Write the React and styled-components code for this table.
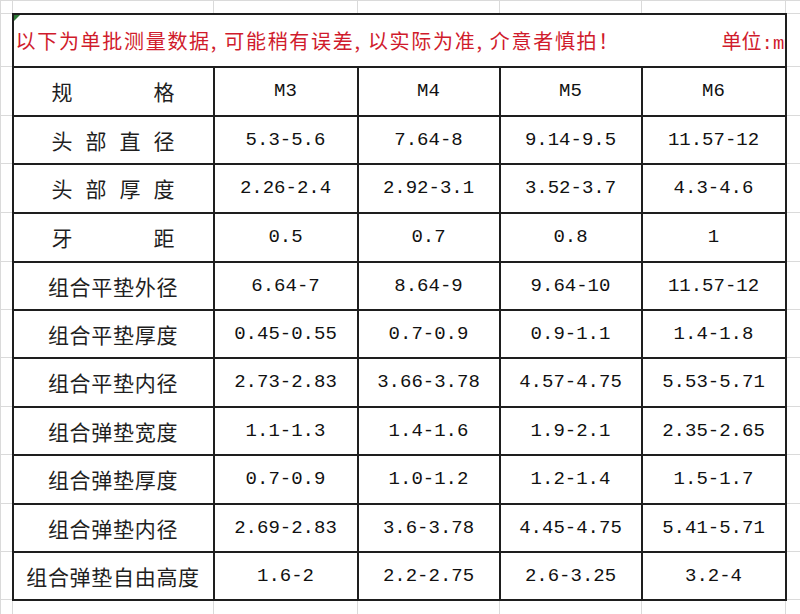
import React from "react";
import styled, { createGlobalStyle } from "styled-components";

const GlobalStyle = createGlobalStyle`
  html, body {
    margin: 0;
    padding: 0;
    background: #ffffff;
  }
  body {
    width: 800px;
    height: 614px;
    overflow: hidden;
    font-family: "Noto Sans CJK SC", "Liberation Sans", sans-serif;
  }
`;

const CJK = `"Noto Sans CJK SC", "Liberation Sans", sans-serif`;
const MONO = `"Liberation Mono", "Noto Sans CJK SC", monospace`;

const Sheet = styled.table`
  width: 800px;
  table-layout: fixed;
  border-collapse: collapse;
  background: #fff;
`;

const Row = styled.tr`
  height: ${(p) => p.$h}px;
`;

const Gutter = styled.td`
  border: 1px solid #dadada;
  padding: 0;
`;

const Cell = styled.td`
  border: 2px solid #1e1e1e;
  padding: 0;
  text-align: center;
  vertical-align: middle;
  color: #111;
  font-family: ${MONO};
  font-size: 19px;
  white-space: nowrap;
  overflow: hidden;
`;

const TitleCell = styled.td`
  position: relative;
  border: 2px solid #1e1e1e;
  padding: 0 0 0 2px;
  vertical-align: middle;
`;

const TitleBar = styled.div`
  display: flex;
  align-items: center;
  justify-content: space-between;
  color: #d01b2c;
  font-family: ${CJK};
  font-size: 20px;
  letter-spacing: 1.7px;
  white-space: nowrap;
`;

const Unit = styled.span`
  width: 63px;
  overflow: hidden;
  letter-spacing: 0;
  span {
    font-family: ${MONO};
    font-size: 19px;
  }
`;

const Marker = styled.span`
  position: absolute;
  left: 0;
  top: 0;
  width: 0;
  height: 0;
  border-top: 6px solid #2f7a38;
  border-right: 6px solid transparent;
`;

const Label = styled.span`
  display: inline-block;
  font-family: ${CJK};
  font-size: 21px;
  letter-spacing: ${(p) => (p.$spread ? 0 : 0.7)}px;
  width: ${(p) => (p.$spread ? "123px" : "auto")};
  text-align: ${(p) => (p.$spread ? "justify" : "center")};
  text-align-last: ${(p) => (p.$spread ? "justify" : "auto")};
  color: #1f1f1f;
`;

const cols = [12, 201, 144, 142, 142, 144, 15];

const sizes = ["M3", "M4", "M5", "M6"];

const rows = [
  { name: "头部直径", spread: true, v: ["5.3-5.6", "7.64-8", "9.14-9.5", "11.57-12"] },
  { name: "头部厚度", spread: true, v: ["2.26-2.4", "2.92-3.1", "3.52-3.7", "4.3-4.6"] },
  { name: "牙距", spread: true, v: ["0.5", "0.7", "0.8", "1"] },
  { name: "组合平垫外径", v: ["6.64-7", "8.64-9", "9.64-10", "11.57-12"] },
  { name: "组合平垫厚度", v: ["0.45-0.55", "0.7-0.9", "0.9-1.1", "1.4-1.8"] },
  { name: "组合平垫内径", v: ["2.73-2.83", "3.66-3.78", "4.57-4.75", "5.53-5.71"] },
  { name: "组合弹垫宽度", v: ["1.1-1.3", "1.4-1.6", "1.9-2.1", "2.35-2.65"] },
  { name: "组合弹垫厚度", v: ["0.7-0.9", "1.0-1.2", "1.2-1.4", "1.5-1.7"] },
  { name: "组合弹垫内径", v: ["2.69-2.83", "3.6-3.78", "4.45-4.75", "5.41-5.71"] },
  { name: "组合弹垫自由高度", v: ["1.6-2", "2.2-2.75", "2.6-3.25", "3.2-4"] },
];

// row heights follow the sheet's line positions
const rowHeights = [48, 49, 49, 48, 48, 49, 48, 49, 48, 48];

function splitChars(text) {
  return text.split("").join(" ");
}

export default function App() {
  return (
    <>
      <GlobalStyle />
      <Sheet>
        <colgroup>
          {cols.map((w, i) => (
            <col key={i} style={{ width: w }} />
          ))}
        </colgroup>
        <tbody>
          <Row $h={13}>
            {cols.map((_, i) => (
              <Gutter key={i} />
            ))}
          </Row>
          <Row $h={53}>
            <Gutter />
            <TitleCell colSpan={5}>
              <Marker />
              <TitleBar>
                <span>以下为单批测量数据, 可能稍有误差, 以实际为准, 介意者慎拍！</span>
                <Unit>
                  单位<span>:mm</span>
                </Unit>
              </TitleBar>
            </TitleCell>
            <Gutter />
          </Row>
          <Row $h={49}>
            <Gutter />
            <Cell>
              <Label $spread>{splitChars("规格")}</Label>
            </Cell>
            {sizes.map((s) => (
              <Cell key={s}>{s}</Cell>
            ))}
            <Gutter />
          </Row>
          {rows.map((r, i) => (
            <Row key={r.name} $h={rowHeights[i]}>
              <Gutter />
              <Cell>
                <Label $spread={r.spread}>{r.spread ? splitChars(r.name) : r.name}</Label>
              </Cell>
              {r.v.map((val, j) => (
                <Cell key={j}>{val}</Cell>
              ))}
              <Gutter />
            </Row>
          ))}
          <Row $h={20}>
            {cols.map((_, i) => (
              <Gutter key={i} />
            ))}
          </Row>
        </tbody>
      </Sheet>
    </>
  );
}
